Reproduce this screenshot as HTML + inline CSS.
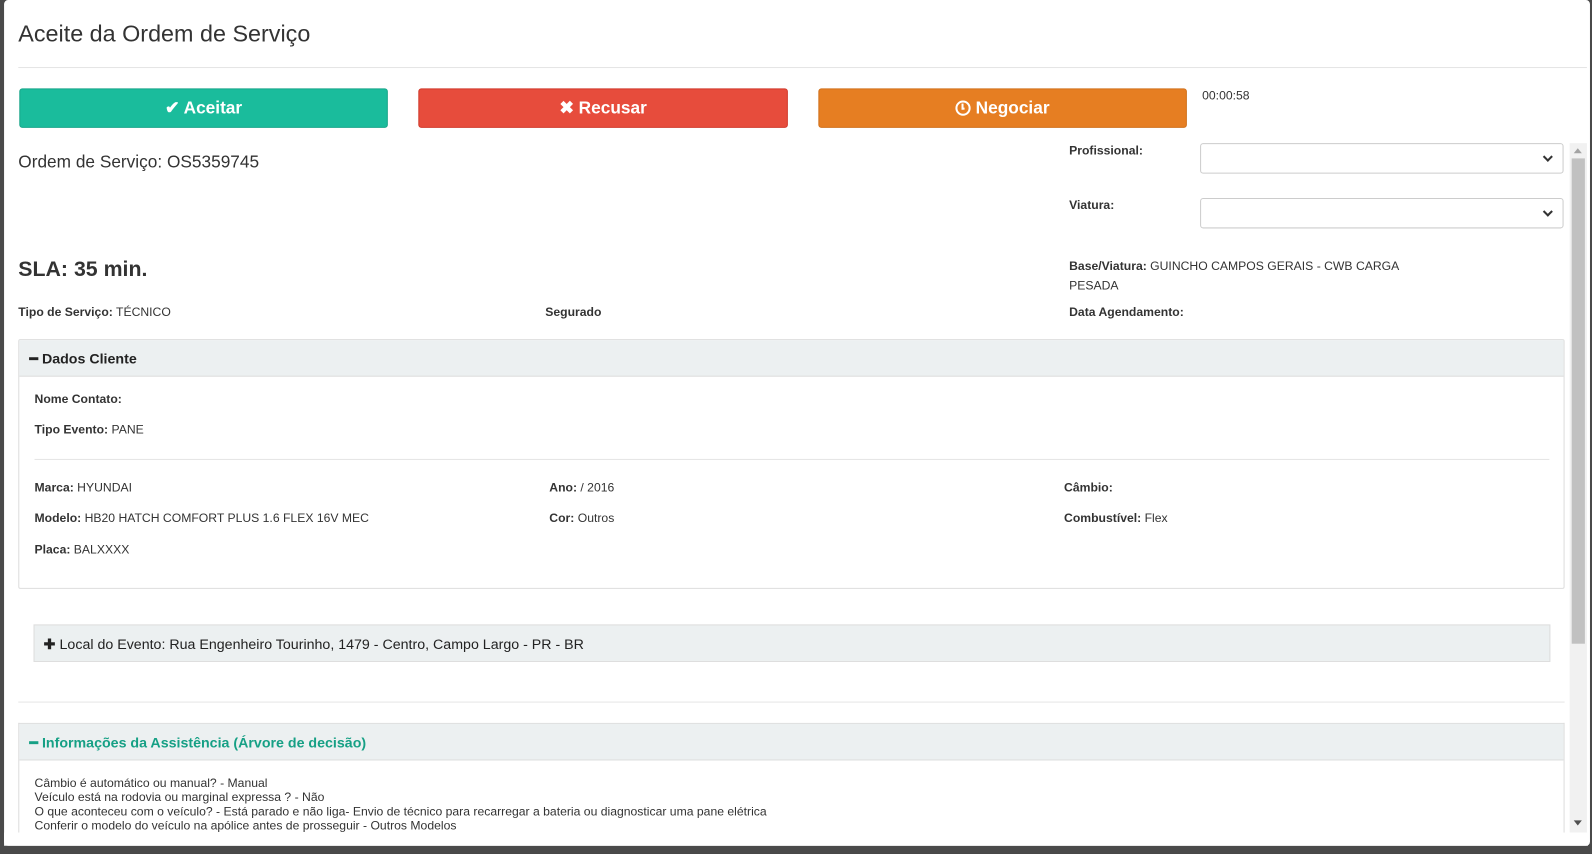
<!DOCTYPE html>
<html><head><meta charset="utf-8"><style>
*{box-sizing:border-box;margin:0;padding:0}
body{width:1592px;height:854px;overflow:hidden;background:#3c3c3c;font-family:"Liberation Sans",Arial,sans-serif;color:#333;position:relative}
#w{position:absolute;left:0;top:0;width:1568px;height:841px;transform:scale(1.01531);transform-origin:0 0}
.a{position:absolute}
.modal{left:4px;top:0;width:1562px;height:833px;background:#fff;border-radius:4px}
.btn{position:absolute;top:87px;height:39px;border-radius:3px;color:#fff;font-weight:bold;font-size:17px;text-align:center;line-height:38px}
.lbl{font-size:12px;color:#333}
.lbl b{font-weight:bold}
.sel{position:absolute;left:1182px;width:358px;height:30px;border:1px solid #ccc;border-radius:3px;background:#fff}
.sel:after{content:"";position:absolute;right:11px;top:9px;width:5px;height:5px;border-right:2px solid #333;border-bottom:2px solid #333;transform:rotate(45deg)}
</style></head><body>
<div id="w">
<div class="a" style="left:0;top:0;width:1568px;height:841px;background:#4a4a4a"></div>
<div class="a modal"></div>
<div class="a" style="left:18px;top:20px;font-size:23px;color:#333">Aceite da Ordem de Serviço</div>
<div class="a" style="left:18px;top:66px;width:1545px;height:1px;background:#e5e5e5"></div>
<div class="btn" style="left:19px;width:363px;background:#1abc9c;border:1px solid #17a589">✔ Aceitar</div>
<div class="btn" style="left:412px;width:364px;background:#e74c3c;border:1px solid #d0392b">✖ Recusar</div>
<div class="btn" style="left:806px;width:363px;background:#e67e22;border:1px solid #d0711c"><span style="display:inline-block;width:15px;height:15px;border:2px solid #fff;border-radius:50%;vertical-align:-2px;position:relative"><span style="position:absolute;left:4px;top:1px;width:3px;height:6px;border-left:2px solid #fff;border-bottom:2px solid #fff"></span></span> Negociar</div>
<div class="a lbl" style="left:1184px;top:87px">00:00:58</div>

<div class="a" style="left:1546px;top:141px;width:17px;height:679px;background:#f1f1f1"></div>
<div class="a" style="left:1548px;top:156px;width:13px;height:478px;background:#c1c1c1"></div>
<div class="a" style="left:1550px;top:146px;width:0;height:0;border-left:4px solid transparent;border-right:4px solid transparent;border-bottom:5px solid #a3a3a3"></div>
<div class="a" style="left:1550px;top:808px;width:0;height:0;border-left:4px solid transparent;border-right:4px solid transparent;border-top:5px solid #505050"></div>

<div class="a" style="left:18px;top:150px;font-size:17px;color:#333">Ordem de Serviço: OS5359745</div>
<div class="a lbl" style="left:1053px;top:141px"><b>Profissional:</b></div>
<div class="sel" style="top:141px"></div>
<div class="a lbl" style="left:1053px;top:195px"><b>Viatura:</b></div>
<div class="sel" style="top:195px"></div>
<div class="a" style="left:18px;top:254px;font-size:21px;font-weight:bold;color:#333">SLA: 35 min.</div>
<div class="a lbl" style="left:1053px;top:253px;line-height:19px"><b>Base/Viatura:</b> GUINCHO CAMPOS GERAIS - CWB CARGA<br>PESADA</div>
<div class="a lbl" style="left:18px;top:300px"><b>Tipo de Serviço:</b> TÉCNICO</div>
<div class="a lbl" style="left:537px;top:300px"><b>Segurado</b></div>
<div class="a lbl" style="left:1053px;top:300px"><b>Data Agendamento:</b></div>

<div class="a" style="left:18px;top:334px;width:1523px;height:246px;border:1px solid #ddd;border-radius:2px"></div>
<div class="a" style="left:19px;top:335px;width:1521px;height:36px;background:#ecf0f1;border-bottom:1px solid #ddd"></div>
<div class="a" style="left:29px;top:345px;font-size:14px;font-weight:bold;color:#222">━ Dados Cliente</div>
<div class="a lbl" style="left:34px;top:386px"><b>Nome Contato:</b></div>
<div class="a lbl" style="left:34px;top:416px"><b>Tipo Evento:</b> PANE</div>
<div class="a" style="left:34px;top:452px;width:1492px;height:1px;background:#e5e5e5"></div>
<div class="a lbl" style="left:34px;top:473px"><b>Marca:</b> HYUNDAI</div>
<div class="a lbl" style="left:34px;top:503px"><b>Modelo:</b> HB20 HATCH COMFORT PLUS 1.6 FLEX 16V MEC</div>
<div class="a lbl" style="left:34px;top:534px"><b>Placa:</b> BALXXXX</div>
<div class="a lbl" style="left:541px;top:473px"><b>Ano:</b> / 2016</div>
<div class="a lbl" style="left:541px;top:503px"><b>Cor:</b> Outros</div>
<div class="a lbl" style="left:1048px;top:473px"><b>Câmbio:</b></div>
<div class="a lbl" style="left:1048px;top:503px"><b>Combustível:</b> Flex</div>

<div class="a" style="left:33px;top:615px;width:1494px;height:37px;background:#ecf0f1;border:1px solid #ddd"></div>
<div class="a" style="left:43px;top:626px;font-size:14px;color:#222"><b>✚</b> Local do Evento: Rua Engenheiro Tourinho, 1479 - Centro, Campo Largo - PR - BR</div>
<div class="a" style="left:18px;top:691px;width:1523px;height:1px;background:#e5e5e5"></div>

<div class="a" style="left:18px;top:712px;width:1523px;height:110px;border:1px solid #ddd;border-bottom:none"></div>
<div class="a" style="left:19px;top:713px;width:1521px;height:36px;background:#ecf0f1;border-bottom:1px solid #ddd"></div>
<div class="a" style="left:29px;top:723px;font-size:14px;font-weight:bold;color:#16a085">━ Informações da Assistência (Árvore de decisão)</div>
<div class="a" style="left:34px;top:764px;font-size:12px;line-height:14px;color:#333">Câmbio é automático ou manual? - Manual<br>Veículo está na rodovia ou marginal expressa ? - Não<br>O que aconteceu com o veículo? - Está parado e não liga- Envio de técnico para recarregar a bateria ou diagnosticar uma pane elétrica<br>Conferir o modelo do veículo na apólice antes de prosseguir - Outros Modelos</div>
<div class="a" style="left:4px;top:820px;width:1560px;height:13px;background:#fff"></div>
</div>
</body></html>
